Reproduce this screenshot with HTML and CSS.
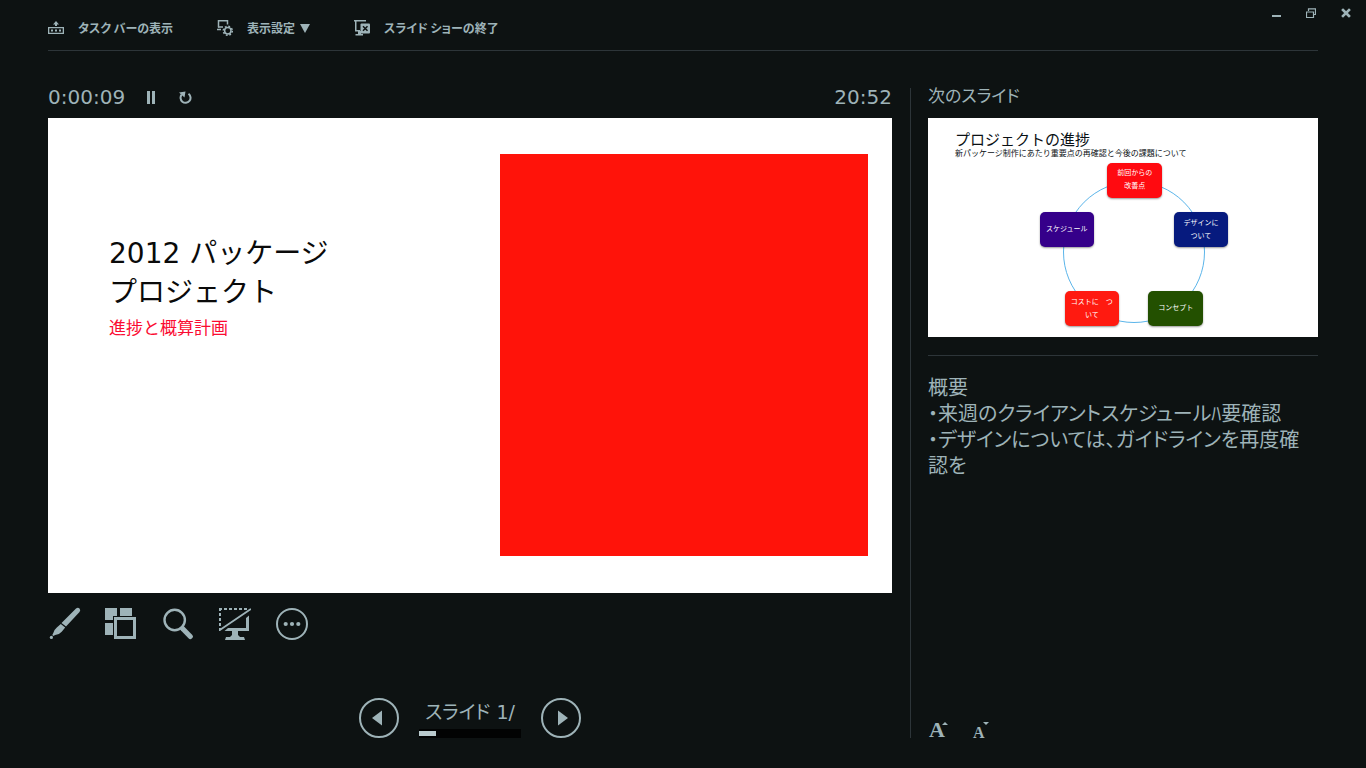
FILE: index.html
```html
<!DOCTYPE html>
<html lang="ja">
<head>
<meta charset="utf-8">
<meta name="viewport" content="width=device-width, initial-scale=1">
<title>発表者ツール</title>
<link rel="stylesheet" href="styles.css">
</head>
<body>
<header class="topbar">
  <nav class="menu">
    <button class="menu-item" type="button">
      <svg class="menu-icon" viewBox="0 0 16 16"><path d="M8 1l3 3.500H9V6H7V4.500H5zM0 7h16v7H0zM1.300 8.300v4.400h13.400V8.300z" fill-rule="evenodd"/><path d="M3 9.500h2v2H3zM7 9.500h2v2H7zM11 9.500h2v2h-2z"/></svg>
      <span>タスク バーの表示</span>
    </button>
    <button class="menu-item" type="button">
      <svg class="menu-icon" viewBox="0 0 16 16"><path d="M1.500 7.500V.8h9V4.500" class="line"/><path d="M1 7h5M0 9.500h4" class="line"/><circle cx="10.800" cy="10.800" r="3.200" class="line"/><circle cx="10.800" cy="10.800" r="4.500" class="teeth"/></svg>
      <span>表示設定</span>
      <svg class="caret" viewBox="0 0 10 9"><path d="M0 0h10L5 9z"/></svg>
    </button>
    <button class="menu-item" type="button">
      <svg class="menu-icon" viewBox="0 0 16 16"><path d="M0 0h12v1.500H0zM1 1h1.500v9H6v1.500H1zM4 11h3v3h2v1.500H1.500V14H4z"/><rect x="6.500" y="3.500" width="9.500" height="10" rx="1"/><path d="M9 6.200l4.500 4.500M13.500 6.200L9 10.700" class="cut"/></svg>
      <span>スライド ショーの終了</span>
    </button>
  </nav>
  <div class="window-controls">
    <button type="button" aria-label="最小化"><svg viewBox="0 0 10 10"><path d="M1 7h9v2H1z"/></svg></button>
    <button type="button" aria-label="元に戻す"><svg viewBox="0 0 10 10"><path d="M2.500 3V.8h7v5.700H8M.5 4h7v5.500h-7zM0 4h8M2 1h8" class="line thin"/></svg></button>
    <button type="button" aria-label="閉じる"><svg viewBox="0 0 10 10"><path d="M2 2l6 6M8 2L2 8" class="close"/></svg></button>
  </div>
</header>

<main class="presenter">
  <section class="stage" aria-label="現在のスライド">
    <div class="status">
      <span class="time">0:00:09</span>
      <button type="button" class="pause" aria-label="一時停止"><svg viewBox="0 0 8 13"><path d="M0 0h3v13H0zM5 0h3v13H5z"/></svg></button>
      <button type="button" class="restart" aria-label="タイマーの再開"><svg viewBox="0 0 13 13"><path d="M2.800 3.500A5 5 0 1 0 9.500 2.800" class="line bold"/><path d="M0 1.500L6.500.5 5.500 6.500z"/></svg></button>
      <span class="time clock">20:52</span>
    </div>
    <article class="slide">
      <div class="slide-copy">
        <h1>2012 パッケージ<br>プロジェクト</h1>
        <p>進捗と概算計画</p>
      </div>
      <div class="slide-block"></div>
    </article>
    <div class="tools">
      <button type="button" aria-label="ペン"><svg viewBox="0 0 33 33"><path d="M28 1.500q2-1.500 3.500 0t0 3.500L18 19.500 13.500 16zM12.800 17l4.400 3.600-3.500 4.200q-2.500 3-6.500 3.200l-2 1-.9-1 1-2q.5-3 3.500-5.500z"/><circle cx="3.400" cy="30.400" r="1.600"/></svg></button>
      <button type="button" aria-label="すべてのスライドを表示"><svg viewBox="0 0 33 33"><path d="M0 1h12v8H8v4H0zM15 1h12v8H15zM0 16h8v12H0z"/><path d="M10.500 11.500h19v19h-19z" class="frame"/></svg></button>
      <button type="button" aria-label="拡大"><svg viewBox="0 0 33 33"><circle cx="12.700" cy="13" r="10.200" class="lens"/><path d="M20.500 21.500l7.800 8" class="handle"/></svg></button>
      <button type="button" aria-label="スライドをカットアウト"><svg viewBox="0 0 33 33"><path d="M0 2h29M1 1v22" class="dots"/><path d="M0 22.500L31 1.500h1V3L1 24H0zM27 11l3-2.500V24H19v4l2 2h4l1 3H6l1-3h4l2-2v-4H5.500L9 21h18z"/></svg></button>
      <button type="button" aria-label="その他のオプション"><svg viewBox="0 0 33 33"><circle cx="16" cy="17" r="15" class="ring"/><circle cx="9.700" cy="17" r="2.100"/><circle cx="16" cy="17" r="2.100"/><circle cx="22.300" cy="17" r="2.100"/></svg></button>
    </div>
    <div class="pager">
      <button type="button" aria-label="前のスライド"><svg viewBox="0 0 40 40"><circle cx="20" cy="20" r="19" class="ring"/><path d="M13 20l10-7.500v15z"/></svg></button>
      <div class="pager-info">
        <span class="pager-label">スライド 1/</span>
        <div class="progress" role="progressbar" aria-label="スライドの進行状況" aria-valuenow="1"><span class="progress-fill"></span></div>
      </div>
      <button type="button" aria-label="次のスライド"><svg viewBox="0 0 40 40"><circle cx="20" cy="20" r="19" class="ring"/><path d="M27 20l-10-7.500v15z"/></svg></button>
    </div>
  </section>

  <aside class="side">
    <h2 class="side-title">次のスライド</h2>
    <article class="next-slide">
      <h3>プロジェクトの進捗</h3>
      <p>新パッケージ制作にあたり重要点の再確認と今後の課題について</p>
      <svg class="cycle" viewBox="0 0 390 219"><circle cx="206" cy="134" r="70.500"/></svg>
      <div class="node node-improve">前回からの<br>改善点</div>
      <div class="node node-design">デザインに<br>ついて</div>
      <div class="node node-concept">コンセプト</div>
      <div class="node node-cost">コストに　つ<br>いて</div>
      <div class="node node-schedule">スケジュール</div>
    </article>
    <div class="notes">
      <p>概要<br>・来週のクライアントスケジュールﾊ要確認<br>・デザインについては、ガイドラインを再度確<br>認を</p>
    </div>
    <div class="text-size">
      <button type="button" class="larger" aria-label="テキストを拡大">A<svg viewBox="0 0 6 3"><path d="M0 3h6L3 0z"/></svg></button>
      <button type="button" class="smaller" aria-label="テキストを縮小">A<svg viewBox="0 0 6 3"><path d="M0 0h6L3 3z"/></svg></button>
    </div>
  </aside>
</main>
</body>
</html>
```
FILE: styles.css
```css
:root {
  --bg: #0d1212;
  --ink: #9eb3b8;
  --rule: #2d3539;
}

* {
  box-sizing: border-box;
}

body {
  margin: 0;
  min-height: 100vh;
  display: flex;
  flex-direction: column;
  padding: 0 48px 30px;
  background: var(--bg);
  color: var(--ink);
  font-family: "DejaVu Sans", "Noto Sans CJK JP", sans-serif;
}

h1, h2, h3, p {
  margin: 0;
  font-weight: 400;
}

button {
  display: flex;
  align-items: center;
  padding: 0;
  border: 0;
  background: none;
  color: inherit;
  font: inherit;
  cursor: pointer;
}

svg {
  display: block;
  fill: currentColor;
}

.line {
  fill: none;
  stroke: currentColor;
  stroke-width: 1.5;
}

.thin {
  stroke-width: 1.2;
}

.bold {
  stroke-width: 2;
}

.topbar {
  display: flex;
  justify-content: space-between;
  align-items: flex-start;
  border-bottom: 1px solid var(--rule);
}

.menu {
  display: flex;
  gap: 44px;
  padding: 18px 0 12px;
  font-family: "Noto Sans CJK JP", sans-serif;
  font-size: 12px;
  font-weight: 700;
  line-height: 20px;
  font-feature-settings: "palt";
  white-space: nowrap;
}

.menu-icon {
  width: 16px;
  height: 16px;
  margin-right: 14px;
}

.caret {
  width: 10px;
  height: 9px;
  margin-left: 5px;
}

.teeth {
  fill: none;
  stroke: currentColor;
  stroke-width: 1.6;
  stroke-dasharray: 1.8 1.73;
}

.cut {
  fill: none;
  stroke: var(--bg);
  stroke-width: 1.5;
}

.window-controls {
  display: flex;
  gap: 25px;
  margin: 8px -33px 0 0;
}

.window-controls svg {
  width: 10px;
  height: 10px;
}

.close {
  stroke: currentColor;
  stroke-width: 2.6;
  stroke-linecap: square;
}

.presenter {
  flex: 1;
  display: grid;
  grid-template-columns: minmax(0, 844fr) minmax(0, 408fr);
  gap: 18px;
  padding-top: 37px;
}

.stage {
  display: flex;
  flex-direction: column;
}

.status {
  display: flex;
  align-items: center;
  height: 30px;
  padding-bottom: 12px;
}

.time {
  font-size: 20px;
  line-height: 18px;
}

.clock {
  margin-left: auto;
}

.pause {
  margin: 0 24px 0 22px;
}

.pause svg {
  width: 8px;
  height: 13px;
}

.restart svg {
  width: 13px;
  height: 13px;
}

.slide {
  display: grid;
  grid-template-columns: minmax(0, 391fr) minmax(0, 368fr);
  aspect-ratio: 844 / 475;
  padding: 36px 24px 37px 61px;
  background: #fff;
}

.slide-copy {
  padding-top: 80px;
}

.slide-copy h1 {
  color: #0a0a0a;
  font-size: 28px;
  line-height: 39px;
}

.slide-copy p {
  color: #fb0b32;
  font-size: 17px;
  line-height: 32px;
}

.slide-block {
  background: #ff130a;
}

.tools {
  display: flex;
  gap: 24px;
  margin-top: 14px;
}

.tools svg {
  width: 33px;
  height: 33px;
}

.frame {
  fill: var(--bg);
  stroke: currentColor;
  stroke-width: 3;
}

.lens,
.ring {
  fill: none;
  stroke: currentColor;
  stroke-width: 2;
}

.lens {
  stroke-width: 2.4;
}

.handle {
  stroke: currentColor;
  stroke-width: 5;
  stroke-linecap: round;
}

.dots {
  fill: none;
  stroke: currentColor;
  stroke-width: 2;
  stroke-dasharray: 3 2;
}

.pager {
  display: flex;
  justify-content: center;
  gap: 20px;
  margin-top: auto;
}

.pager svg {
  width: 40px;
  height: 40px;
}

.pager-info {
  display: flex;
  flex-direction: column;
  justify-content: space-between;
  width: 102px;
  text-align: center;
}

.pager-label {
  font-size: 19px;
  line-height: 28px;
  font-feature-settings: "palt";
  white-space: nowrap;
}

.progress {
  height: 9px;
  padding: 2px 0;
  background: #020303;
}

.progress-fill {
  display: block;
  width: 17%;
  height: 5px;
  background: #b9cacd;
}

.side {
  display: flex;
  flex-direction: column;
  padding-left: 17px;
  border-left: 1px solid var(--rule);
}

.side-title {
  height: 30px;
  font-size: 17px;
  line-height: 17px;
  font-feature-settings: "palt";
}

.next-slide {
  position: relative;
  aspect-ratio: 390 / 219;
  padding: 13px 27px;
  background: #fff;
  color: #0a1014;
  white-space: nowrap;
}

.next-slide h3 {
  font-size: 15px;
  line-height: 18px;
}

.next-slide p {
  font-size: 8px;
  line-height: 10px;
}

.cycle {
  position: absolute;
  inset: 0;
  width: 100%;
  fill: none;
  stroke: #5bb5ea;
}

.node {
  position: absolute;
  display: grid;
  place-content: center;
  width: 14%;
  height: 16%;
  border-radius: 5px;
  box-shadow: 0 1px 2px #0006;
  color: #fff;
  font-size: 7px;
  line-height: 13px;
  text-align: center;
}

.node-improve {
  left: 46%;
  top: 20.5%;
  background: #ff0a10;
}

.node-design {
  left: 63%;
  top: 43%;
  background: #061a7e;
}

.node-concept {
  left: 56.5%;
  top: 79%;
  background: #235000;
}

.node-cost {
  left: 35%;
  top: 79%;
  background: #ff1a10;
}

.node-schedule {
  left: 28.6%;
  top: 43%;
  background: #35008a;
}

.notes {
  margin-top: 18px;
  padding-top: 18px;
  border-top: 1px solid var(--rule);
  font-family: "Noto Sans CJK JP", sans-serif;
  font-size: 20px;
  font-weight: 300;
  line-height: 26px;
  font-feature-settings: "palt";
  white-space: nowrap;
}

.text-size {
  display: flex;
  align-items: flex-end;
  gap: 25px;
  margin-top: auto;
  font-family: "Liberation Serif", serif;
  font-weight: 700;
}

.text-size button {
  position: relative;
  height: 16px;
  padding: 0 2px 0 1px;
}

.text-size .larger {
  font-size: 22px;
  line-height: 18px;
}

.text-size .smaller {
  align-items: flex-end;
  font-size: 16px;
  line-height: 10px;
}

.text-size svg {
  position: absolute;
  top: 0;
  right: -1px;
  width: 6px;
  height: 3px;
}

.text-size .smaller svg {
  right: -3px;
}
```
